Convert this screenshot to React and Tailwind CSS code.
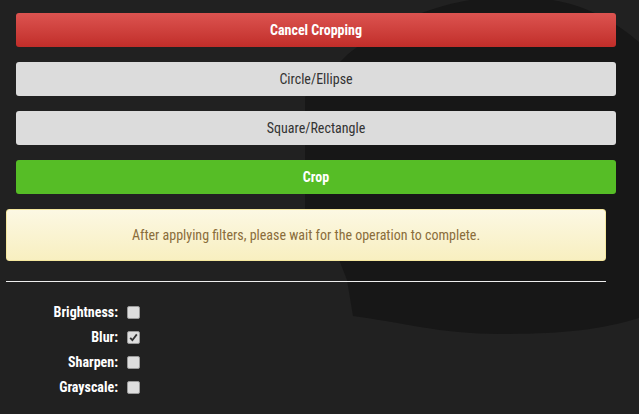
import React, { useState } from 'react';

const filtros = ['Brightness', 'Blur', 'Sharpen', 'Grayscale'];

const Fondo = () => (
  <svg className="absolute inset-0 pointer-events-none" width="639" height="414" viewBox="0 0 639 414">
    <path
      d="M470 0 L552 0 C590 6 618 24 639 42 L639 318 C600 330 560 334 500 334 C440 334 400 322 353 316 L347 280 L340 262 L305 209 L305 97 L347 55 C372 34 420 8 470 0 Z"
      fill="#171717"
    />
  </svg>
);

const Casilla = ({ checked, onChange }) => (
  <button
    onClick={onChange}
    className="w-[13px] h-[13px] rounded-[2px] border border-[#9a9a9a] bg-[#dedede] flex items-center justify-center"
  >
    {checked && (
      <svg width="9" height="9" viewBox="0 0 9 9">
        <path d="M1.2 4.8 L3.4 7.2 L7.8 1.4" stroke="#333" strokeWidth="1.8" fill="none" />
      </svg>
    )}
  </button>
);

export default function App() {
  const [activos, setActivos] = useState({ Blur: true });

  const toggle = (f) => setActivos({ ...activos, [f]: !activos[f] });

  return (
    <div className="relative w-[639px] h-[414px] overflow-hidden bg-[#212121] font-['Roboto_Condensed',Roboto,sans-serif] font-stretch-condensed text-[14px]">
      <Fondo />
      <div className="relative pt-[13px]">
        <div className="ml-[16px] w-[600px] flex flex-col gap-[15px]">
          <button className="h-[34px] rounded-[3px] bg-linear-to-b from-[#dc5350] to-[#c12d29] text-white font-bold">
            Cancel Cropping
          </button>
          <button className="h-[34px] rounded-[3px] bg-[#dcdcdc] text-[#333]">Circle/Ellipse</button>
          <button className="h-[34px] rounded-[3px] bg-[#dcdcdc] text-[#333]">Square/Rectangle</button>
          <button className="h-[34px] rounded-[3px] bg-[#56bd26] text-white font-bold">Crop</button>
        </div>

        <div className="ml-[6px] mt-[15px] w-[600px] h-[52px] rounded-[3px] border border-[#f5e79e] bg-linear-to-b from-[#fcf8e3] to-[#f8efc0] text-[#8a6d3b] flex items-center justify-center">
          After applying filters, please wait for the operation to complete.
        </div>

        <div className="ml-[6px] mt-[20px] w-[600px] h-px bg-[#eeeeee]" />

        <div className="mt-[18px] flex flex-col">
          {filtros.map((f) => (
            <div key={f} className="h-[25px] flex items-center">
              <span className="w-[118px] text-right text-white font-bold">{f}:</span>
              <div className="ml-[9px]">
                <Casilla checked={!!activos[f]} onChange={() => toggle(f)} />
              </div>
            </div>
          ))}
        </div>
      </div>
    </div>
  );
}
